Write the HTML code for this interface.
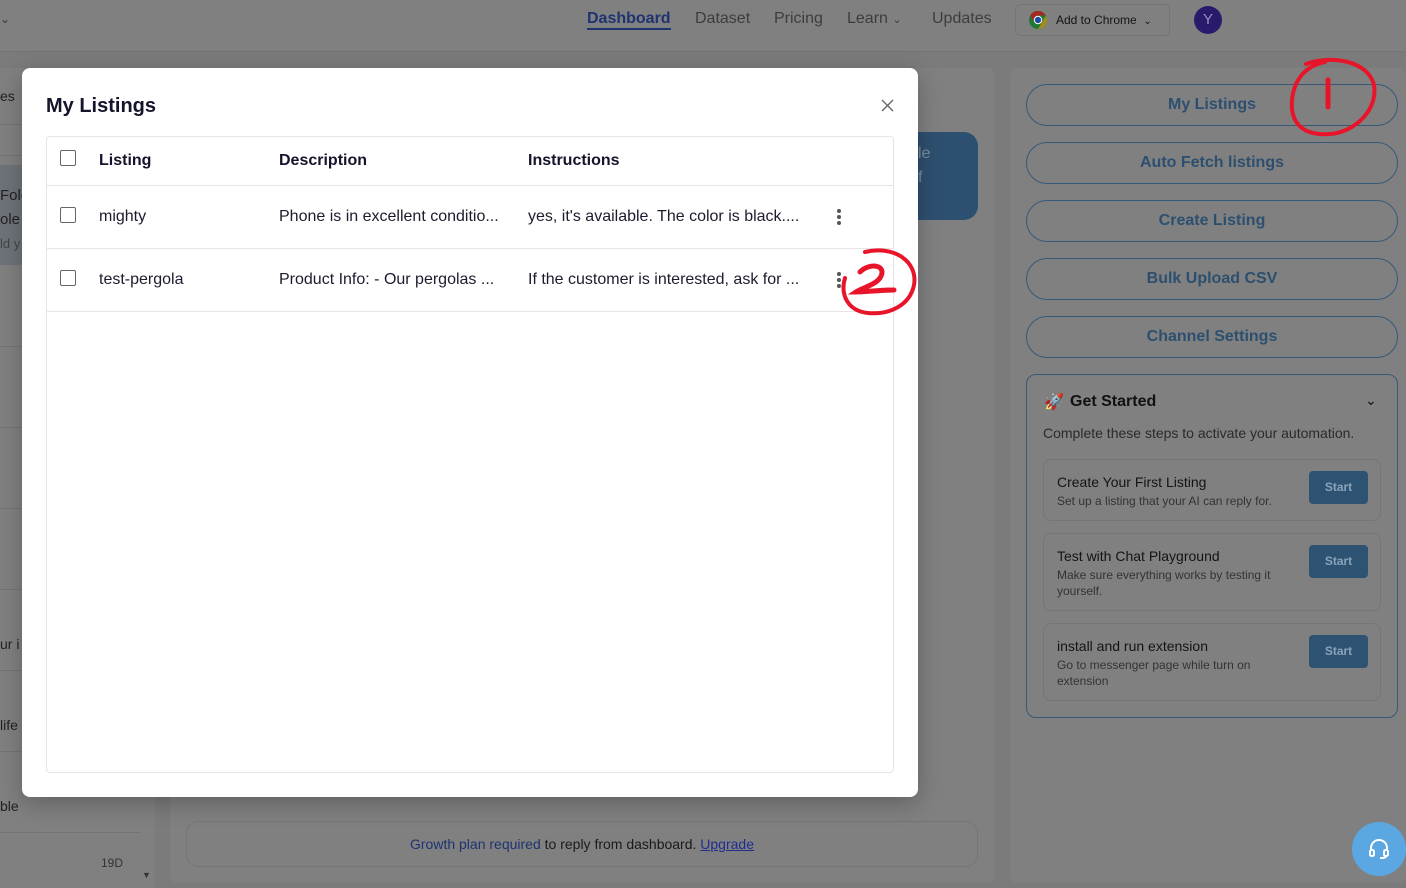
<!DOCTYPE html>
<html><head><meta charset="utf-8"><style>
*{box-sizing:border-box;margin:0;padding:0}
body{width:1406px;height:888px;overflow:hidden;position:relative;background:#7b7b7c;font-family:"Liberation Sans",Arial,sans-serif}
.a{position:absolute}
.nav{color:#3d3d3d;font-size:16px;top:10px}
.btn{position:absolute;left:1026px;width:372px;height:42px;border:1.5px solid #36597a;border-radius:21px;text-align:center;line-height:39px;color:#2d4f6f;font-weight:bold;font-size:16px}
.step{position:absolute;left:1043px;width:338px;border:1px solid #757575;border-radius:8px}
.step .t{position:absolute;left:13px;top:14px;font-size:14px;color:#141414}
.step .d{position:absolute;left:13px;top:33px;font-size:12px;color:#333;line-height:16px;width:230px}
.step .s{position:absolute;right:12px;top:11px;width:59px;height:33px;background:#2e5272;border-radius:4px;color:#8aa3bb;font-weight:bold;font-size:12px;text-align:center;line-height:33px}
.cb{position:absolute;left:13px;width:16px;height:16px;border:1px solid #666;border-radius:2px;background:#fff}
.row{position:absolute;left:0;width:846px;border-top:1px solid #e5e5e5}
.row span{position:absolute;font-size:16px;color:#1c1c2e}
.dots{position:absolute;left:790px;width:4px}
.dots i{display:block;width:4px;height:4px;border-radius:2px;background:#555;margin-bottom:2px}
</style></head><body>
<!-- header -->
<div class="a" style="left:0;top:0;width:1406px;height:52px;background:#808080;border-bottom:1px solid #747474"></div>
<div class="a" style="left:0;top:12px;color:#333;font-size:12px">⌄</div>
<div class="a nav" style="left:587px;color:#1e3370;font-weight:bold;border-bottom:2px solid #1e3370;line-height:18px">Dashboard</div>
<div class="a nav" style="left:695px">Dataset</div>
<div class="a nav" style="left:774px">Pricing</div>
<div class="a nav" style="left:847px">Learn <span style="font-size:11px">⌄</span></div>
<div class="a nav" style="left:932px">Updates</div>
<div class="a" style="left:1015px;top:4px;width:155px;height:32px;border:1px solid #747474;border-radius:5px"></div>
<svg class="a" style="left:1028px;top:10px" width="20" height="20" viewBox="0 0 20 20"><circle cx="10" cy="10" r="9" fill="#1e7a34"/><path d="M10 1a9 9 0 0 1 7.8 4.5H10z" fill="#a52820"/><path d="M10 1A9 9 0 0 0 2.2 5.5L6 12 10 5.5h7.8" fill="#a52820"/><path d="M17.8 5.5A9 9 0 0 1 10 19l4-7z" fill="#a48a1a"/><circle cx="10" cy="10" r="4.2" fill="#fff"/><circle cx="10" cy="10" r="3.2" fill="#1a4fa0"/></svg>
<div class="a" style="left:1056px;top:13px;font-size:12px;color:#141414">Add to Chrome &nbsp;<span style="font-size:10px">⌄</span></div>
<div class="a" style="left:1194px;top:6px;width:28px;height:28px;border-radius:14px;background:#2a1a6c;color:#9990c0;text-align:center;line-height:28px;font-size:15px">Y</div>
<!-- left sidebar -->
<div class="a" style="left:0;top:68px;width:155px;height:820px;background:#808080"></div>
<div class="a" style="left:0;top:88px;font-size:14px;color:#222">es</div>
<div class="a" style="left:0;top:124px;width:40px;border-top:1px solid #747474"></div>
<div class="a" style="left:0;top:155px;width:40px;border-top:1px solid #747474"></div>
<div class="a" style="left:0;top:165px;width:30px;height:100px;background:#6e737a"></div>
<div class="a" style="left:0;top:184px;font-size:15px;color:#222;line-height:24px">Fold<br>ole<br><span style="font-size:13px;color:#444">ld y</span></div>
<div class="a" style="left:0;top:346px;width:30px;border-top:1px solid #747474"></div>
<div class="a" style="left:0;top:427px;width:30px;border-top:1px solid #747474"></div>
<div class="a" style="left:0;top:508px;width:30px;border-top:1px solid #747474"></div>
<div class="a" style="left:0;top:589px;width:30px;border-top:1px solid #747474"></div>
<div class="a" style="left:0;top:636px;font-size:14px;color:#222">ur i</div>
<div class="a" style="left:0;top:670px;width:30px;border-top:1px solid #747474"></div>
<div class="a" style="left:0;top:717px;font-size:14px;color:#222">life</div>
<div class="a" style="left:0;top:751px;width:30px;border-top:1px solid #747474"></div>
<div class="a" style="left:0;top:798px;font-size:14px;color:#222">ble</div>
<div class="a" style="left:0;top:832px;width:140px;border-top:1px solid #747474"></div>
<div class="a" style="left:101px;top:856px;font-size:12px;color:#333">19D</div>
<div class="a" style="left:142px;top:870px;font-size:9px;color:#333">▼</div>
<!-- center panel -->
<div class="a" style="left:170px;top:68px;width:825px;height:815px;background:#808080;border-radius:8px"></div>
<div class="a" style="left:900px;top:132px;width:78px;height:88px;background:#2e5070;border-radius:0 14px 14px 0"></div>
<div class="a" style="left:918px;top:142px;font-size:16px;color:#7b8ea0;line-height:24px">le<br>f</div>
<div class="a" style="left:186px;top:821px;width:792px;height:46px;border:1px solid #767676;border-radius:12px;text-align:center;line-height:44px;font-size:14px;color:#1a1a1a"><span style="color:#1e3370">Growth plan required</span> to reply from dashboard. <span style="color:#1e2e90;text-decoration:underline">Upgrade</span></div>
<!-- right panel -->
<div class="a" style="left:1010px;top:68px;width:396px;height:815px;background:#808080;border-radius:8px"></div>
<div class="btn" style="top:84px">My Listings</div>
<div class="btn" style="top:142px">Auto Fetch listings</div>
<div class="btn" style="top:200px">Create Listing</div>
<div class="btn" style="top:258px">Bulk Upload CSV</div>
<div class="btn" style="top:316px">Channel Settings</div>
<div class="a" style="left:1026px;top:374px;width:372px;height:344px;border:1.5px solid #36597a;border-radius:10px"></div>
<div class="a" style="left:1044px;top:392px;font-size:16px">🚀</div>
<div class="a" style="left:1070px;top:393px;font-size:16px;font-weight:bold;color:#111">Get Started</div>
<div class="a" style="left:1365px;top:392px;font-size:14px;color:#111">⌄</div>
<div class="a" style="left:1043px;top:425px;font-size:14px;color:#2a2a2a">Complete these steps to activate your automation.</div>
<div class="step" style="top:459px;height:62px"><div class="t">Create Your First Listing</div><div class="d">Set up a listing that your AI can reply for.</div><div class="s">Start</div></div>
<div class="step" style="top:533px;height:78px"><div class="t">Test with Chat Playground</div><div class="d">Make sure everything works by testing it yourself.</div><div class="s">Start</div></div>
<div class="step" style="top:623px;height:78px"><div class="t">install and run extension</div><div class="d">Go to messenger page while turn on extension</div><div class="s">Start</div></div>
<!-- modal -->
<div class="a" style="left:22px;top:68px;width:896px;height:729px;background:#fff;border-radius:8px;box-shadow:0 6px 24px rgba(0,0,0,.25)">
 <div class="a" style="left:24px;top:27px;font-size:20px;font-weight:bold;color:#14142b">My Listings</div>
 <svg class="a" style="left:859px;top:31px" width="13" height="13" viewBox="0 0 13 13"><path d="M1 1L12 12M12 1L1 12" stroke="#666" stroke-width="1.4"/></svg>
 <div class="a" style="left:24px;top:68px;width:848px;height:637px;border:1px solid #e5e5e5;border-radius:4px">
  <div class="cb" style="top:13px"></div>
  <span class="a" style="left:52px;top:15px;font-size:16px;font-weight:bold;color:#14142b">Listing</span>
  <span class="a" style="left:232px;top:15px;font-size:16px;font-weight:bold;color:#14142b">Description</span>
  <span class="a" style="left:481px;top:15px;font-size:16px;font-weight:bold;color:#14142b">Instructions</span>
  <div class="row" style="top:48px;height:63px"><div class="cb" style="top:21px"></div><span style="left:52px;top:22px">mighty</span><span style="left:232px;top:22px">Phone is in excellent conditio...</span><span style="left:481px;top:22px">yes, it's available. The color is black....</span><div class="dots" style="top:23px"><i></i><i></i><i></i></div></div>
  <div class="row" style="top:111px;height:63px"><div class="cb" style="top:21px"></div><span style="left:52px;top:22px">test-pergola</span><span style="left:232px;top:22px">Product Info: - Our pergolas ...</span><span style="left:481px;top:22px">If the customer is interested, ask for ...</span><div class="dots" style="top:23px"><i></i><i></i><i></i></div></div>
  <div class="row" style="top:174px;height:1px"></div>
 </div>
</div>
<!-- annotations -->
<svg class="a" style="left:0;top:0" width="1406" height="888" viewBox="0 0 1406 888">
<path d="M1306 64C1330 55 1368 60 1374 85C1378 110 1355 132 1330 134C1305 136 1290 125 1292 100C1294 80 1305 66 1325 62" fill="none" stroke="#e8152a" stroke-width="4" stroke-linecap="round"/>
<path d="M1328 80L1328 107" stroke="#e8152a" stroke-width="5" stroke-linecap="round"/>
<path d="M865 252C895 245 918 262 914 285C910 305 890 315 868 313C848 311 840 295 845 278" fill="none" stroke="#e8152a" stroke-width="4" stroke-linecap="round"/>
<path d="M860 272C870 262 888 265 880 278C875 285 862 288 856 292C865 292 880 290 894 290" fill="none" stroke="#e8152a" stroke-width="5" stroke-linecap="round"/>
</svg>
<div class="a" style="left:1352px;top:822px;width:54px;height:54px;border-radius:27px;background:#5ba7e2"></div>
<svg class="a" style="left:1368px;top:838px" width="22" height="22" viewBox="0 0 22 22"><path d="M3 13V10a8 8 0 0 1 16 0v3" fill="none" stroke="#fff" stroke-width="2"/><rect x="2" y="12" width="4" height="6" rx="1.5" fill="none" stroke="#fff" stroke-width="2"/><rect x="16" y="12" width="4" height="6" rx="1.5" fill="none" stroke="#fff" stroke-width="2"/><path d="M18 18c0 2-3 2-6 2" fill="none" stroke="#fff" stroke-width="2"/></svg>
</body></html>
